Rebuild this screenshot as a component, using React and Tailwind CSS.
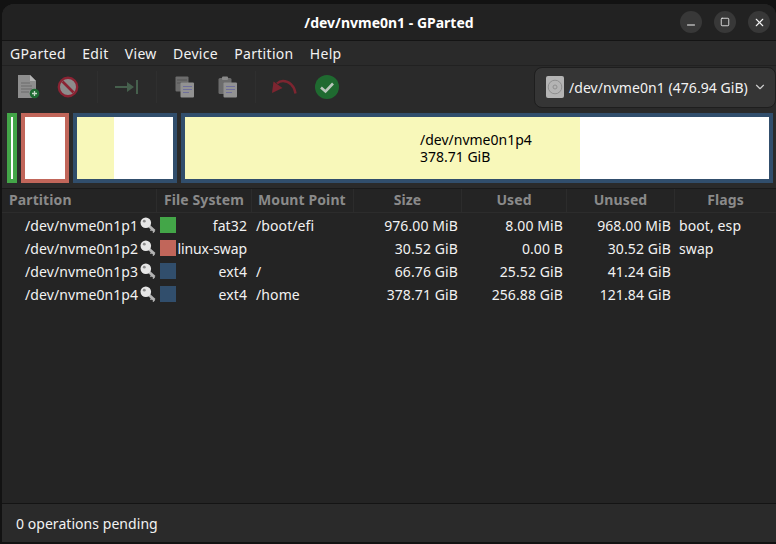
import { ChevronDown, Minus, Square, X } from 'lucide-react';

const rows = [
  { name: '/dev/nvme0n1p1', color: 'bg-[#43a648]', fs: 'fat32', mount: '/boot/efi', size: '976.00 MiB', used: '8.00 MiB', unused: '968.00 MiB', flags: 'boot, esp' },
  { name: '/dev/nvme0n1p2', color: 'bg-[#c1665a]', fs: 'linux-swap', mount: '', size: '30.52 GiB', used: '0.00 B', unused: '30.52 GiB', flags: 'swap' },
  { name: '/dev/nvme0n1p3', color: 'bg-[#314e6c]', fs: 'ext4', mount: '/', size: '66.76 GiB', used: '25.52 GiB', unused: '41.24 GiB', flags: '' },
  { name: '/dev/nvme0n1p4', color: 'bg-[#314e6c]', fs: 'ext4', mount: '/home', size: '378.71 GiB', used: '256.88 GiB', unused: '121.84 GiB', flags: '' },
];

const columns = 'grid grid-cols-[155px_95px_102px_108px_105px_108px_1fr]';

function NewIcon() {
  return (
    <svg width="24" height="26" viewBox="0 0 24 26">
      <path d="M1 1h12l6 6v17H1z" fill="#8e8e8e" />
      <path d="M13 1l6 6h-6z" fill="#b5b5b5" />
      <path d="M4 9h9M4 12h11M4 15h11M4 18h8" stroke="#6a6a6a" strokeWidth="1" />
      <circle cx="17.5" cy="19.5" r="4.8" fill="#1e6a32" />
      <path d="M15 19.5h5M17.5 17v5" stroke="#c8d8c8" strokeWidth="1.3" />
    </svg>
  );
}

function DeleteIcon() {
  return (
    <svg width="22" height="22" viewBox="0 0 22 22">
      <circle cx="11" cy="11" r="9.2" fill="#8c8c8c" stroke="#8a2333" strokeWidth="2.4" />
      <path d="M5.5 5.5l11 11" stroke="#8a2333" strokeWidth="2.6" />
    </svg>
  );
}

function ResizeIcon() {
  return (
    <svg width="24" height="16" viewBox="0 0 24 16">
      <path d="M0 8h15" stroke="#46604d" strokeWidth="2" />
      <path d="M12 3l7 5-7 5z" fill="#46604d" />
      <path d="M22 1v14" stroke="#46604d" strokeWidth="2" />
    </svg>
  );
}

function CopyIcon() {
  return (
    <svg width="20" height="22" viewBox="0 0 20 22">
      <rect x="0.5" y="0.5" width="13" height="15" rx="1" fill="#6c6c6c" />
      <path d="M2 4h10M2 7h10" stroke="#555" />
      <rect x="5.5" y="6.5" width="13.5" height="15" rx="1" fill="#929292" />
      <path d="M8 10.5h9M8 13.5h9M8 16.5h6" stroke="#6f6f9c" />
    </svg>
  );
}

function PasteIcon() {
  return (
    <svg width="20" height="22" viewBox="0 0 20 22">
      <rect x="0.5" y="2" width="13" height="16" rx="1.5" fill="#6c6c6c" />
      <rect x="4" y="0.5" width="6" height="3.5" rx="1" fill="#8a8a8a" />
      <rect x="5.5" y="6.5" width="13.5" height="15" rx="1" fill="#929292" />
      <path d="M8 10.5h9M8 13.5h9M8 16.5h6" stroke="#6f6f9c" />
    </svg>
  );
}

function UndoIcon() {
  return (
    <svg width="26" height="18" viewBox="0 0 26 18">
      <path d="M24.5 15.5C23.5 8 18 3 12 3 9.5 3 7.5 4 6 5.5" fill="none" stroke="#7d2530" strokeWidth="2.4" />
      <path d="M1 15l1.5-11.5 9 6.5z" fill="#7d2530" />
    </svg>
  );
}

function ApplyIcon() {
  return (
    <svg width="24" height="24" viewBox="0 0 24 24">
      <circle cx="12" cy="12" r="12" fill="#1f6a30" />
      <path d="M6 12.5l4.5 4 7.5-8" fill="none" stroke="#b9c6bb" strokeWidth="2.6" />
    </svg>
  );
}

function KeyIcon() {
  return (
    <svg width="16" height="16" viewBox="0 0 16 16" className="-mt-[2px]">
      <path d="M8.5 8.5l6 5.5" stroke="#b4b4b4" strokeWidth="3" />
      <path d="M12 12l-1.5 1.8M14.5 13.8l-1.5 1.8" stroke="#b4b4b4" strokeWidth="1.4" />
      <circle cx="5.8" cy="5.8" r="5.3" fill="#e6e6e6" />
      <circle cx="4.3" cy="4.2" r="1.4" fill="#8c8c8c" />
    </svg>
  );
}

function DiskIcon() {
  return (
    <div className="w-[18px] h-[22px] rounded-[2px] bg-[#b4b4b4] flex items-center justify-center">
      <svg width="16" height="16" viewBox="0 0 16 16">
        <circle cx="8" cy="8" r="6.8" fill="none" stroke="#8f8f8f" strokeWidth="1" />
        <circle cx="8" cy="8" r="2" fill="none" stroke="#8f8f8f" strokeWidth="1" />
      </svg>
    </div>
  );
}

function Sep() {
  return <div className="w-px h-[32px] bg-[#2f2f2f]" />;
}

export default function App() {
  return (
    <div className="w-[776px] h-[544px] bg-[#121212] pl-[2px] pt-[4px] pb-[2px] overflow-hidden font-['Noto_Sans',sans-serif] text-[14px] text-[#f2f2f2]">
      <div className="h-full flex flex-col rounded-t-[12px] overflow-hidden bg-[#282828]">
        {/* title bar */}
        <div className="h-[37px] shrink-0 relative flex items-center justify-center bg-[#222222] border-b border-[#141414]">
          <span className="font-bold text-white text-[14px]">/dev/nvme0n1 - GParted</span>
          <div className="absolute right-[6px] top-[7px] flex gap-[12px]">
            <div className="w-[22px] h-[22px] rounded-full bg-[#383838] flex items-center justify-center"><Minus size={12} className="mt-[6px]" /></div>
            <div className="w-[22px] h-[22px] rounded-full bg-[#383838] flex items-center justify-center"><Square size={10} /></div>
            <div className="w-[22px] h-[22px] rounded-full bg-[#383838] flex items-center justify-center"><X size={13} /></div>
          </div>
        </div>
        {/* menu */}
        <div className="h-[25px] shrink-0 flex items-center gap-[16.3px] pl-[8px] tracking-[0.3px] bg-[#2a2a2a] border-b border-[#212121]">
          <span>GParted</span>
          <span>Edit</span>
          <span>View</span>
          <span>Device</span>
          <span>Partition</span>
          <span>Help</span>
        </div>
        {/* toolbar */}
        <div className="h-[42px] shrink-0 flex items-center pl-[15px] bg-[#2a2a2a]">
          <NewIcon />
          <div className="w-[16px]" />
          <DeleteIcon />
          <div className="w-[18px]" />
          <Sep />
          <div className="w-[17px]" />
          <ResizeIcon />
          <div className="w-[17px]" />
          <Sep />
          <div className="w-[18px]" />
          <CopyIcon />
          <div className="w-[23px]" />
          <PasteIcon />
          <div className="w-[17px]" />
          <Sep />
          <div className="w-[15px]" />
          <UndoIcon />
          <div className="w-[18px]" />
          <ApplyIcon />
          <div className="ml-auto w-[242px] h-[41px] rounded-[8px] bg-[#353535] border border-[#1e1e1e] flex items-center pl-[11px] gap-[5px]">
            <DiskIcon />
            <span className="tracking-[0.05px]">/dev/nvme0n1 (476.94 GiB)</span>
            <ChevronDown size={14} className="text-[#cccccc]" />
          </div>
        </div>
        {/* disk graphic */}
        <div className="h-[80px] shrink-0 flex gap-[4px] pl-[5px] pt-[5px] bg-[#2a2a2a]">
          <div className="w-[10px] h-[70px] border-[4px] border-[#43a648] bg-white" />
          <div className="w-[48px] h-[70px] border-[4px] border-[#c1665a] bg-white" />
          <div className="w-[104px] h-[70px] border-[4px] border-[#314e6c] bg-white">
            <div className="w-[37px] h-full bg-[#f8f8ba]" />
          </div>
          <div className="w-[592px] h-[70px] border-[4px] border-[#314e6c] bg-white">
            <div className="w-[395px] h-full bg-[#f8f8ba] flex items-center pl-[235px] text-black text-[14px] leading-[17px]">
              <div>/dev/nvme0n1p4<br />378.71 GiB</div>
            </div>
          </div>
        </div>
        {/* table */}
        <div className="flex-1 bg-[#242424] border-t border-[#1a1a1a] tracking-[0.1px]">
          <div className={`${columns} h-[24px] leading-[22px] font-bold text-[#8a8a8a] border-b border-[#2c2c2c]`}>
            <div className="pl-[7px] border-r border-[#2c2c2c]">Partition</div>
            <div className="pl-[7px] border-r border-[#2c2c2c]">File System</div>
            <div className="pl-[6px] border-r border-[#2c2c2c]">Mount Point</div>
            <div className="text-center border-r border-[#2c2c2c]">Size</div>
            <div className="text-center border-r border-[#2c2c2c]">Used</div>
            <div className="text-center border-r border-[#2c2c2c]">Unused</div>
            <div className="text-center">Flags</div>
          </div>
          <div className="pt-[1px]">
            {rows.map((r) => (
              <div key={r.name} className={`${columns} h-[23px] items-center`}>
                <div className="pl-[23px] flex items-center gap-[2px]">
                  <span>{r.name}</span>
                  <KeyIcon />
                </div>
                <div className="flex items-center justify-between pl-[3px] pr-[5px]">
                  <div className={`w-[16px] h-[16px] -mt-[1px] ${r.color}`} />
                  <span className={r.fs === 'linux-swap' ? 'tracking-[-0.1px]' : ''}>{r.fs}</span>
                </div>
                <div className="pl-[4px]">{r.mount}</div>
                <div className="text-right pr-[4px]">{r.size}</div>
                <div className="text-right pr-[4px]">{r.used}</div>
                <div className="text-right pr-[4px]">{r.unused}</div>
                <div className="pl-[4px]">{r.flags}</div>
              </div>
            ))}
          </div>
        </div>
        {/* status bar */}
        <div className="h-[39px] shrink-0 flex items-center pl-[14px] tracking-[0.05px] bg-[#2a2a2a] border-t border-[#141414]">
          0 operations pending
        </div>
      </div>
    </div>
  );
}
